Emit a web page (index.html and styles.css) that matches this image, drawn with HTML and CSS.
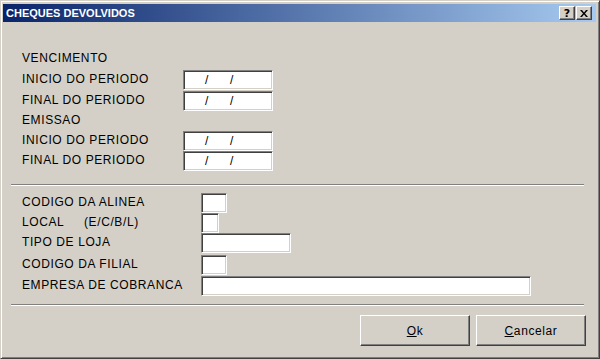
FILE: index.html
```html
<!DOCTYPE html>
<html lang="pt">
<head>
  <meta charset="UTF-8" />
  <title>Cheques Devolvidos</title>
  <link rel="stylesheet" href="styles.css">
</head>
<body>

<div class="window">
  <div class="titlebar">
    <span class="title">CHEQUES DEVOLVIDOS</span>
    <div class="title-buttons">
      <div class="tbtn help">?</div>
      <div class="tbtn close">
        <svg width="8" height="7" viewBox="0 0 8 7">
          <path d="M0 0h2l2 2.5 2-2.5h2l-3 3.5 3 3.5h-2l-2-2.5-2 2.5h-2l3-3.5z" fill="#000"/>
        </svg>
      </div>
    </div>
  </div>

  <div class="content">
    <!-- Periodos -->
    <div class="section dates">
      <div class="row head r-venc"><span class="label">VENCIMENTO</span></div>
      <div class="row r-first">
        <span class="label">INICIO DO PERIODO</span>
        <div class="field date"><i>/</i><i>/</i></div>
      </div>
      <div class="row">
        <span class="label">FINAL DO PERIODO</span>
        <div class="field date"><i>/</i><i>/</i></div>
      </div>
      <div class="row head"><span class="label">EMISSAO</span></div>
      <div class="row">
        <span class="label">INICIO DO PERIODO</span>
        <div class="field date"><i>/</i><i>/</i></div>
      </div>
      <div class="row">
        <span class="label">FINAL DO PERIODO</span>
        <div class="field date"><i>/</i><i>/</i></div>
      </div>
    </div>

    <div class="separator sep1"></div>

    <!-- Filtros -->
    <div class="section filters">
      <div class="row">
        <span class="label">CODIGO DA ALINEA</span>
        <div class="field w-26"></div>
      </div>
      <div class="row">
        <span class="label">LOCAL&nbsp;&nbsp;&nbsp;&nbsp;&nbsp;(E/C/B/L)</span>
        <div class="field w-18"></div>
      </div>
      <div class="row">
        <span class="label">TIPO DE LOJA</span>
        <div class="field w-90"></div>
      </div>
      <div class="row r-gap2">
        <span class="label">CODIGO DA FILIAL</span>
        <div class="field w-26"></div>
      </div>
      <div class="row r-gap1">
        <span class="label">EMPRESA DE COBRANCA</span>
        <div class="field w-330"></div>
      </div>
    </div>

    <div class="separator sep2"></div>

    <div class="actions">
      <button class="btn"><u>O</u>k</button>
      <button class="btn"><u>C</u>ancelar</button>
    </div>
  </div>
</div>

</body>
</html>
```

FILE: styles.css
```css
body {
  margin: 0;
  background: #d4d0c8;
  font-family: "Liberation Sans", Arial, sans-serif;
  font-size: 12px;
  color: #000;
}

.window {
  width: 600px;
  height: 359px;
  box-sizing: border-box;
  background: #d4d0c8;
  border-top: 1px solid #d4d0c8;
  border-left: 1px solid #d4d0c8;
  border-right: 1px solid #404040;
  border-bottom: 1px solid #404040;
  box-shadow: inset 1px 1px #fff, inset -1px -1px #808080;
  padding: 3px 3px 3px 2px;
}

.titlebar {
  height: 18px;
  display: flex;
  align-items: center;
  justify-content: space-between;
  background: linear-gradient(to right, #0a246a, #a6caf0);
  padding: 0 4px 0 3px;
}

.title {
  color: #fff;
  font-family: "Liberation Sans", Arial, sans-serif;
  font-weight: bold;
  font-size: 11px;
}

.title-buttons {
  display: flex;
  gap: 1px;
}

.tbtn {
  width: 16px;
  height: 14px;
  box-sizing: border-box;
  background: #d4d0c8;
  border-top: 1px solid #fff;
  border-left: 1px solid #fff;
  border-right: 1px solid #404040;
  border-bottom: 1px solid #404040;
  box-shadow: inset -1px -1px #808080;
  display: flex;
  align-items: center;
  justify-content: center;
}

.help {
  font-family: "DejaVu Sans", sans-serif;
  font-weight: bold;
  font-size: 11px;
  line-height: 1;
}

.close svg {
  display: block;
}

.content {
  padding: 26px 12px 0 8px;
  letter-spacing: 0.6px;
}

.section {
  padding-left: 11px;
}

.row {
  display: flex;
  align-items: center;
  height: 20px;
}

.r-venc {
  height: 21px;
}

.r-first {
  height: 22px;
}

.r-gap2 {
  margin-top: 2px;
}

.r-gap1 {
  margin-top: 1px;
}

.label {
  white-space: nowrap;
  position: relative;
  top: -1px;
}

.dates .label {
  width: 161px;
}

.filters .label {
  width: 179px;
}

.field {
  height: 20px;
  box-sizing: border-box;
  background: #fff;
  border-top: 1px solid #808080;
  border-left: 1px solid #808080;
  border-right: 1px solid #fff;
  border-bottom: 1px solid #fff;
  box-shadow: inset 1px 1px #404040, inset -1px -1px #d4d0c8;
}

.date {
  width: 90px;
  display: flex;
  align-items: center;
  padding-left: 21px;
  letter-spacing: 0;
}

.date i {
  font-style: normal;
  width: 25px;
}

.w-26 { width: 26px; }
.w-18 { width: 18px; }
.w-90 { width: 90px; }
.w-330 { width: 330px; }

.separator {
  height: 1px;
  background: #808080;
  border-bottom: 1px solid #fff;
}

.sep1 {
  margin-top: 13px;
  margin-bottom: 7px;
}

.sep2 {
  margin-top: 8px;
}

.actions {
  display: flex;
  justify-content: flex-end;
  gap: 6px;
  margin-top: 9px;
  margin-right: -2px;
}

.btn {
  width: 110px;
  height: 31px;
  background: #d4d0c8;
  font-family: "Liberation Sans", Arial, sans-serif;
  font-size: 12px;
  letter-spacing: 0.6px;
  color: #000;
  border-top: 1px solid #fff;
  border-left: 1px solid #fff;
  border-right: 1px solid #404040;
  border-bottom: 1px solid #404040;
  box-shadow: inset -1px -1px #808080;
  padding: 0;
}
```
